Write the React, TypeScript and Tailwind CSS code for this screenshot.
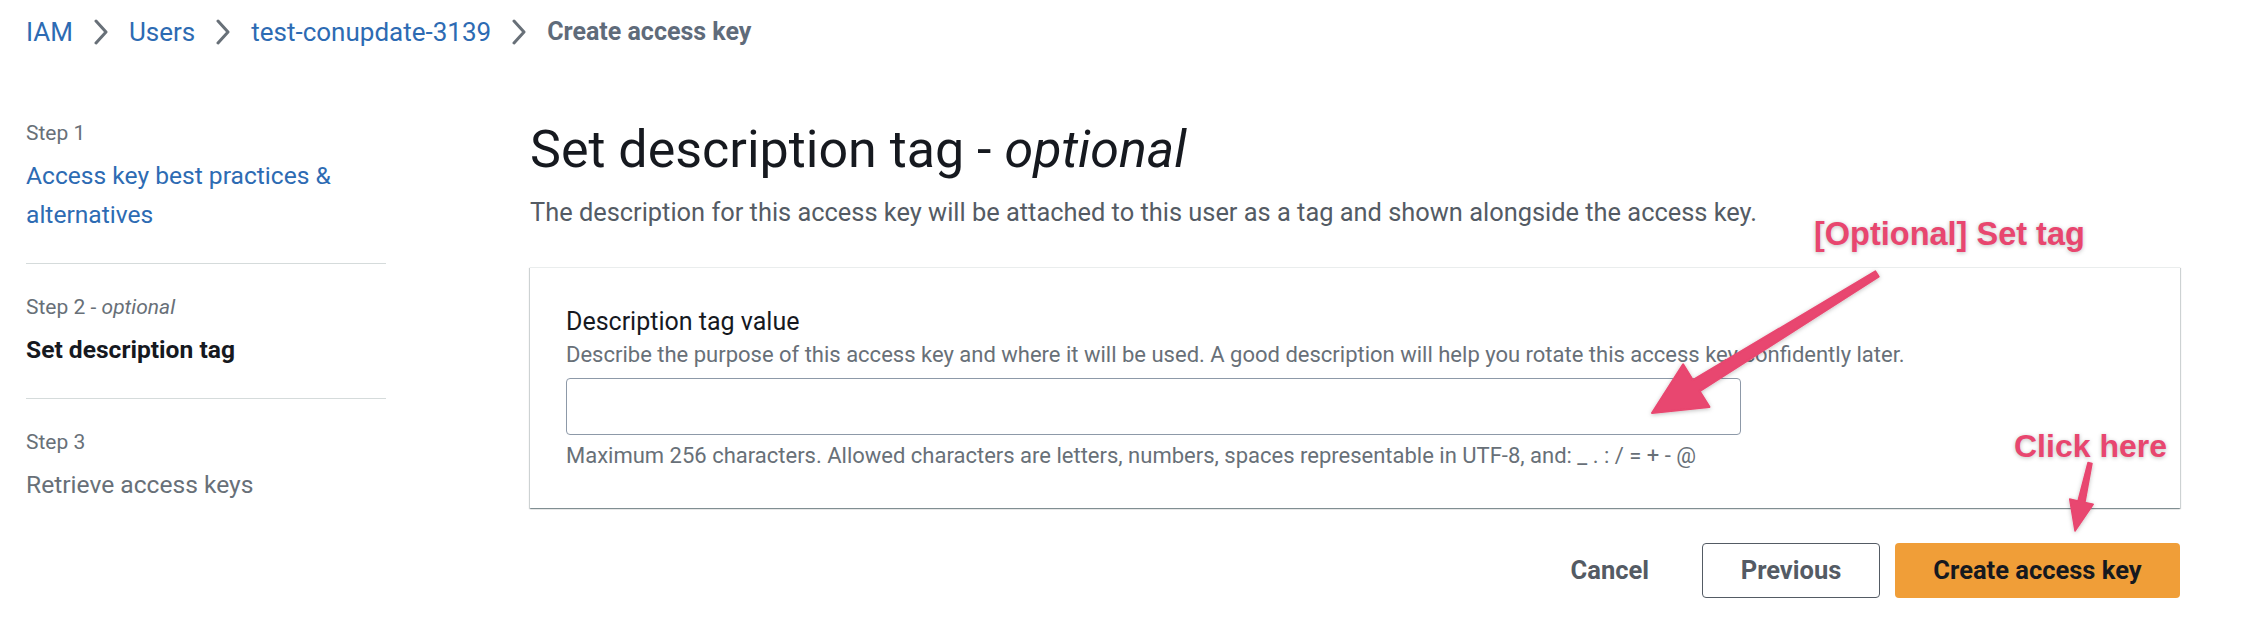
import React from "react";

type Pt = [number, number];

function arrowPoints(tail: Pt, tip: Pt, tailHalf: number, shaftHalf: number, headLen: number, headHalf: number): string {
  const dx = tip[0] - tail[0];
  const dy = tip[1] - tail[1];
  const len = Math.sqrt(dx * dx + dy * dy);
  const ux = dx / len;
  const uy = dy / len;
  const nx = -uy;
  const ny = ux;
  const bx = tip[0] - ux * headLen;
  const by = tip[1] - uy * headLen;
  const pts: Pt[] = [
    [tail[0] + nx * tailHalf, tail[1] + ny * tailHalf],
    [bx + nx * shaftHalf, by + ny * shaftHalf],
    [bx + nx * headHalf, by + ny * headHalf],
    [tip[0], tip[1]],
    [bx - nx * headHalf, by - ny * headHalf],
    [bx - nx * shaftHalf, by - ny * shaftHalf],
    [tail[0] - nx * tailHalf, tail[1] - ny * tailHalf],
  ];
  return pts.map((p) => `${p[0].toFixed(1)},${p[1].toFixed(1)}`).join(" ");
}

function Chevron() {
  return (
    <svg width="16" height="26" viewBox="0 0 16 26" className="mx-[20px] shrink-0">
      <polyline points="3,2 13,13 3,24" fill="none" stroke="#687078" strokeWidth="3" strokeLinecap="round" strokeLinejoin="round" />
    </svg>
  );
}

function Step({ label, optional, title, state }: { label: string; optional?: boolean; title: React.ReactNode; state: "link" | "active" | "disabled" }) {
  const titleCls =
    state === "link"
      ? "text-[#2d6bb3]"
      : state === "active"
      ? "text-[#16191f] font-bold"
      : "text-[#687078]";
  return (
    <div className="py-[29px]">
      <div className="text-[21px] leading-[28px] text-[#687078]">
        {label}
        {optional && (
          <>
            {" - "}
            <span className="italic">optional</span>
          </>
        )}
      </div>
      <div className={`mt-[9px] text-[24.6px] leading-[39px] ${titleCls}`}>{title}</div>
    </div>
  );
}

export default function App() {
  return (
    <div className="relative w-[2264px] h-[640px] overflow-hidden bg-white font-['Roboto','Noto_Sans',sans-serif]">
      {/* Breadcrumb */}
      <nav className="flex items-center pl-[26px] pt-[14px] h-[50px] text-[26px] leading-[36px]">
        <span className="text-[#2d6bb3]">IAM</span>
        <Chevron />
        <span className="text-[#2d6bb3]">Users</span>
        <Chevron />
        <span className="text-[#2d6bb3]">test-conupdate-3139</span>
        <Chevron />
        <span className="text-[#5f6b7a] font-bold text-[25px]">Create access key</span>
      </nav>

      <div className="flex items-start pl-[26px] pt-[40px]">
        {/* Side navigation */}
        <aside className="w-[360px] shrink-0">
          <div className="divide-y divide-[#d5dbdb]">
            <Step label="Step 1" title={<>Access key best practices &amp;<br />alternatives</>} state="link" />
            <Step label="Step 2" optional title="Set description tag" state="active" />
            <Step label="Step 3" title="Retrieve access keys" state="disabled" />
          </div>
        </aside>

        {/* Main content */}
        <main className="ml-[144px] w-[1650px] pt-[30px]">
          <h1 className="text-[52px] leading-[60px] text-[#16191f] font-normal">
            Set description tag - <span className="italic">optional</span>
          </h1>
          <p className="mt-[14px] text-[25.4px] leading-[36px] text-[#545b64]">
            The description for this access key will be attached to this user as a tag and shown alongside the access key.
          </p>

          <section className="mt-[37px] bg-white border-t border-[#eaeded] px-[36px] pt-[36px] pb-[37px] shadow-[0_1px_1px_0_rgba(0,28,36,0.3),1px_1px_1px_0_rgba(0,28,36,0.15),-1px_1px_1px_0_rgba(0,28,36,0.15)]">
            <label className="block text-[25px] leading-[36px] text-[#16191f]">Description tag value</label>
            <div className="text-[22px] leading-[30px] text-[#687078]">
              Describe the purpose of this access key and where it will be used. A good description will help you rotate this access key confidently later.
            </div>
            <input
              type="text"
              className="mt-[8px] block w-[1175px] h-[57px] rounded-[4px] border border-[#8d99a8] bg-white outline-none"
            />
            <div className="mt-[6px] text-[22px] leading-[30px] text-[#687078]">
              Maximum 256 characters. Allowed characters are letters, numbers, spaces representable in UTF-8, and: _ . : / = + - @
            </div>
          </section>

          <div className="mt-[35px] flex justify-end items-center gap-[15px]">
            <button className="h-[55px] px-[38px] text-[25.5px] font-bold text-[#545b64]">Cancel</button>
            <button className="h-[55px] w-[178px] rounded-[4px] border border-[#545b64] bg-white text-[25.5px] font-bold text-[#545b64]">
              Previous
            </button>
            <button className="h-[55px] w-[285px] rounded-[4px] bg-[#f09e38] text-[25.5px] font-bold text-[#16191f]">
              Create access key
            </button>
          </div>
        </main>
      </div>

      {/* Annotations */}
      <div className="absolute left-[1814px] top-[213px] text-[32.5px] leading-[42px] font-bold text-[#e8466f] font-['Liberation_Sans',sans-serif] [text-shadow:0_1px_4px_rgba(0,0,0,0.25)] whitespace-nowrap">
        [Optional] Set tag
      </div>
      <div className="absolute left-[2014px] top-[425px] text-[32px] leading-[42px] font-bold text-[#e8466f] font-['Liberation_Sans',sans-serif] [text-shadow:0_1px_4px_rgba(0,0,0,0.25)] whitespace-nowrap">
        Click here
      </div>
      <svg className="absolute left-0 top-0 pointer-events-none" width="2264" height="640" viewBox="0 0 2264 640">
        <defs>
          <filter id="sh" x="-20%" y="-20%" width="140%" height="140%">
            <feDropShadow dx="0" dy="1" stdDeviation="2" floodColor="#000" floodOpacity="0.25" />
          </filter>
        </defs>
        <polygon
          points={arrowPoints([1877, 274], [1652, 413], 3, 6.5, 52, 25)}
          fill="#e8466f"
          stroke="#e8466f"
          strokeWidth="2"
          strokeLinejoin="round"
          filter="url(#sh)"
        />
        <polygon
          points={arrowPoints([2090, 463], [2075, 531], 2, 3.5, 30, 12)}
          fill="#e8466f"
          stroke="#e8466f"
          strokeWidth="1.5"
          strokeLinejoin="round"
          filter="url(#sh)"
        />
      </svg>
    </div>
  );
}
